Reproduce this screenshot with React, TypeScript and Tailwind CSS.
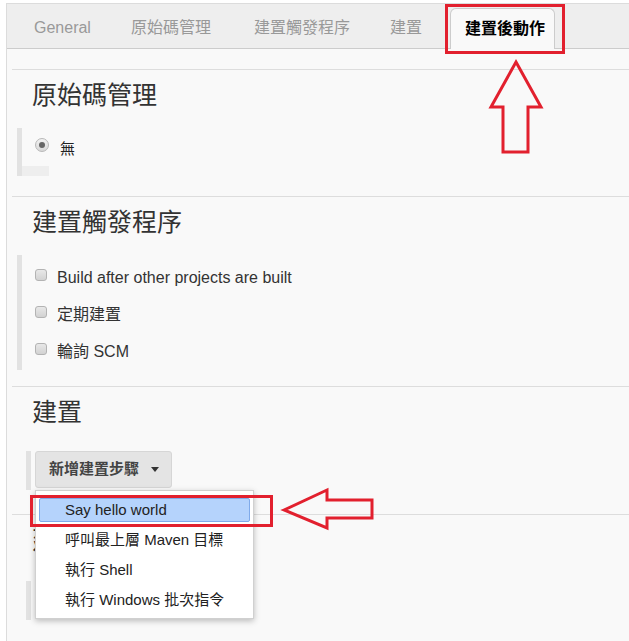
import React from "react";

const tabs = [
  { label: "General", w: "w-[97px]" },
  { label: "原始碼管理", w: "w-[123px]" },
  { label: "建置觸發程序", w: "w-[136px]" },
  { label: "建置", w: "w-[60px]" },
];

const triggers = ["Build after other projects are built", "定期建置", "輪詢 SCM"];

const menuItems = ["Say hello world", "呼叫最上層 Maven 目標", "執行 Shell", "執行 Windows 批次指令"];

function Heading({ children }: { children: React.ReactNode }) {
  return <h2 className="pt-[10px] pl-[20px] text-[25px] leading-[30px] font-normal text-[#333]">{children}</h2>;
}

function Checkbox() {
  return (
    <span className="block shrink-0 w-[12px] h-[12px] mb-[6px] rounded-[3px] border border-[#b3b3b3] bg-gradient-to-b from-[#e8e8e8] to-[#d2d2d2]" />
  );
}

function AddButton({ label }: { label: string }) {
  return (
    <button
      type="button"
      className="flex items-center h-[37px] w-[137px] pl-[13px] rounded-[3px] border border-[#d6d6d6] bg-[#e4e4e4] text-[15px] font-bold text-[#444] whitespace-nowrap"
    >
      {label}
      <span className="ml-[12px] w-0 h-0 border-l-[4px] border-r-[4px] border-t-[5px] border-l-transparent border-r-transparent border-t-[#333]" />
    </button>
  );
}

export default function App() {
  return (
    <div className="relative w-[629px] h-[641px] overflow-hidden bg-white font-['Liberation_Sans','Noto_Sans_CJK_TC',sans-serif] text-[#333]">
      <div className="ml-[6px] mt-[3px] h-[638px] border-l border-t border-[#dcdcdc] bg-[#f9f9f9]">
        {/* tab bar */}
        <div className="flex items-end h-[45px] bg-[#eeeeee] border-b border-[#cccccc]">
          <div className="w-[27px]" />
          {tabs.map((t) => (
            <div key={t.label} className={`${t.w} h-[44px] pt-[4px] flex items-center text-[16px] text-[#999]`}>
              {t.label}
            </div>
          ))}
          <div className="relative -mb-px h-[41px] w-[105px] pl-[14px] flex items-center rounded-t-[6px] border border-b-0 border-[#cccccc] bg-[#f9f9f9] text-[16px] font-bold text-black">
            建置後動作
          </div>
        </div>

        <div className="ml-[5px] mt-[20px]">
          {/* 原始碼管理 */}
          <section className="border-t border-[#dddddd] pb-[20px]">
            <Heading>原始碼管理</Heading>
            <div className="ml-[5px] mt-[18px] border-l-[5px] border-[#e2e2e2]">
              <div className="flex items-center h-[32px] pt-[2px]">
                <span className="ml-[13px] shrink-0 flex items-center justify-center w-[14px] h-[14px] rounded-full border border-[#b8b8b8] bg-gradient-to-b from-[#f2f2f2] to-[#d8d8d8]">
                  <span className="w-[6px] h-[6px] rounded-full bg-[#666]" />
                </span>
                <span className="ml-[11px] mt-[8px] text-[15px] text-[#222]">無</span>
              </div>
              <div className="mt-[6px] h-[10px] w-[27px] bg-[#eeeeee]" />
            </div>
          </section>

          {/* 建置觸發程序 */}
          <section className="border-t border-[#dddddd] pb-[16px]">
            <Heading>建置觸發程序</Heading>
            <div className="ml-[5px] mt-[18px] pt-[4px] border-l-[5px] border-[#e2e2e2]">
              {triggers.map((t) => (
                <div key={t} className="flex items-center h-[37px] pl-[13px]">
                  <Checkbox />
                  <span className="ml-[10px] text-[16px] whitespace-nowrap">{t}</span>
                </div>
              ))}
            </div>
          </section>

          {/* 建置 */}
          <section className="border-t border-[#dddddd] pb-[24px]">
            <Heading>建置</Heading>
            <div className="ml-[14px] mt-[24px] flex">
              <div className="w-[5px] h-[39px] bg-[#e2e2e2]" />
              <div className="relative ml-[4px]">
                <AddButton label="新增建置步驟" />
                <div className="absolute left-0 top-full z-10 w-[219px] pt-[4px] pb-[3px] bg-white border border-[#d0d0d0] shadow-[0_2px_6px_rgba(0,0,0,0.25)]">
                  {menuItems.map((m, i) => (
                    <div key={m} className="relative h-[30px] flex items-center pl-[29px] text-[15px] text-[#222] whitespace-nowrap">
                      {i === 0 && (
                        <span className="absolute left-[3px] right-[3px] top-[3px] bottom-[3px] rounded-[2px] border border-[#7faaea] bg-[#b5d3fc]" />
                      )}
                      <span className="relative">{m}</span>
                    </div>
                  ))}
                </div>
              </div>
            </div>
          </section>

          {/* 建置後動作 */}
          <section className="border-t border-[#dddddd]">
            <Heading>建置後動作</Heading>
            <div className="ml-[14px] mt-[26px] flex">
              <div className="w-[5px] h-[39px] bg-[#e2e2e2]" />
              <div className="ml-[4px]">
                <AddButton label="新增建置後動作" />
              </div>
            </div>
          </section>
        </div>
      </div>

      {/* annotations */}
      <svg className="absolute inset-0 z-20 pointer-events-none" width="629" height="641" viewBox="0 0 629 641">
        <g fill="none" stroke="#e2202e" strokeWidth="3" strokeLinejoin="miter">
          <rect x="446.5" y="5.5" width="117" height="47" />
          <rect x="31.5" y="496.5" width="240" height="29" />
          <polygon points="516,62 541,107 528,107 528,152 503,152 503,107 491,107" />
          <polygon points="284,510 327,490 327,500 372,500 372,518 327,518 327,528" />
        </g>
      </svg>
    </div>
  );
}
